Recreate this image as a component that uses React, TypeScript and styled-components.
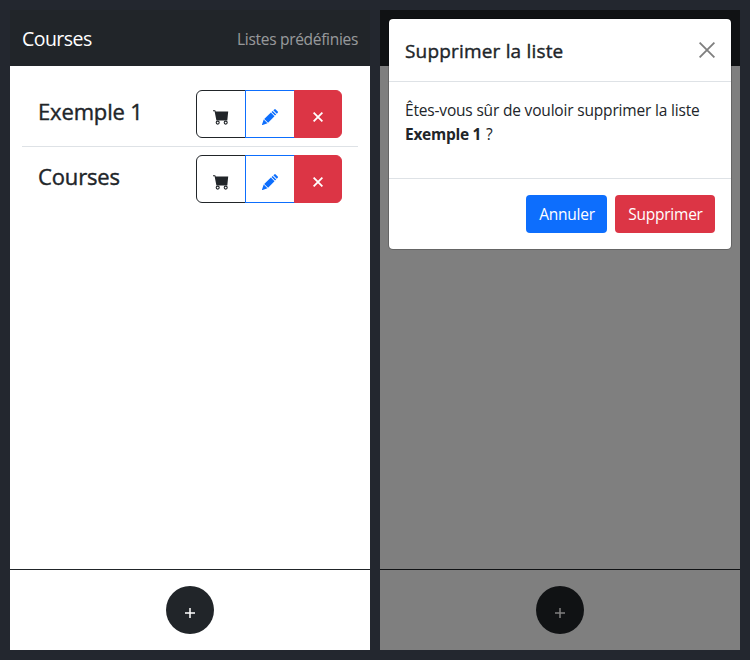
import React from "react";
import styled, { createGlobalStyle } from "styled-components";

const Global = createGlobalStyle`
  *, *::before, *::after { box-sizing: border-box; }
  body {
    margin: 0;
    background: #23272f;
    color: #212529;
    font-family: "Segoe UI", "Open Sans", "Noto Sans", sans-serif;
    font-size: 15.5px;
    letter-spacing: -0.18px;
    line-height: 24px;
  }
  h2, h5, p { margin: 0; }
  button { font: inherit; letter-spacing: inherit; cursor: pointer; }
`;

const Stage = styled.main`
  display: flex;
  gap: 10px;
  padding: 10px;
  height: 660px;
`;

const Screen = styled.section`
  position: relative;
  display: flex;
  flex-direction: column;
  width: 360px;
  height: 640px;
  background: #fff;
`;

const Navbar = styled.nav`
  display: flex;
  align-items: center;
  justify-content: space-between;
  height: 56px;
  padding: 1px 12px 0;
  background: #212529;
`;

const Brand = styled.span`
  color: #fff;
  font-size: 19.5px;
  line-height: 30px;
  letter-spacing: -0.55px;
  padding-top: 1px;
`;

const NavLink = styled.a`
  color: rgba(255, 255, 255, 0.55);
  letter-spacing: -0.3px;
`;

const Lists = styled.div`
  flex: 1;
  padding: 16px 12px;
`;

const ListRow = styled.div`
  display: flex;
  justify-content: space-between;
  padding: 8px 16px;
  & + & { border-top: 1px solid #dee2e6; }
`;

const ListName = styled.h2`
  font-size: 22px;
  font-weight: 500;
  line-height: 29px;
  letter-spacing: -0.15px;
  padding-top: 7px;
  -webkit-text-stroke: 0.4px currentColor;
`;

const ButtonGroup = styled.div`
  display: flex;
`;

const tones = { dark: "#212529", primary: "#0d6efd", danger: "#dc3545" };

const GroupButton = styled.button<{ $tone: keyof typeof tones; $filled?: boolean }>`
  display: flex;
  align-items: center;
  justify-content: center;
  width: ${(p) => (p.$filled ? 48 : 50)}px;
  height: 48px;
  padding: ${(p) => (p.$filled ? 5 : 6)}px 0 0;
  border: 1px solid ${(p) => tones[p.$tone]};
  background: ${(p) => (p.$filled ? tones[p.$tone] : "#fff")};
  color: ${(p) => (p.$filled ? "#fff" : tones[p.$tone])};
  & + & { margin-left: -1px; }
  &:first-child { border-radius: 6px 0 0 6px; }
  &:last-child { border-radius: 0 6px 6px 0; }
`;

const Footer = styled.footer`
  display: flex;
  justify-content: center;
  height: 81px;
  padding-top: 16px;
  border-top: 1px solid #212529;
`;

const AddButton = styled.button`
  width: 48px;
  height: 48px;
  padding: 5px 0 0;
  border: 0;
  border-radius: 50%;
  background: #212529;
  color: #fff;
  display: flex;
  align-items: center;
  justify-content: center;
`;

const Backdrop = styled.div`
  position: absolute;
  inset: 0;
  padding: 8px;
  background: rgba(0, 0, 0, 0.5);
`;

const Dialog = styled.div`
  border: 1px solid rgba(0, 0, 0, 0.2);
  border-radius: 5px;
  background: #fff;
  background-clip: padding-box;
`;

const DialogHeader = styled.header`
  display: flex;
  align-items: center;
  justify-content: space-between;
  height: 63px;
  padding: 0 16px;
  border-bottom: 1px solid #dee2e6;
`;

const DialogTitle = styled.h5`
  font-size: 19px;
  font-weight: 500;
  line-height: 30px;
  letter-spacing: 0.18px;
  padding-top: 1px;
  -webkit-text-stroke: 0.4px currentColor;
`;

const CloseButton = styled.button`
  display: flex;
  padding: 0;
  border: 0;
  background: none;
  color: #000;
  opacity: 0.5;
`;

const DialogBody = styled.div`
  height: 96px;
  padding: 16px;
  white-space: nowrap;
`;

const ListRef = styled.b`
  letter-spacing: -0.28px;
  margin-right: 1px;
`;

const DialogFooter = styled.footer`
  display: flex;
  justify-content: flex-end;
  gap: 8px;
  padding: 16px;
  border-top: 1px solid #dee2e6;
`;

const ActionButton = styled.button<{ $tone: keyof typeof tones; $width: number }>`
  width: ${(p) => p.$width}px;
  height: 38px;
  padding: 0 0 1px 1px;
  border: 0;
  border-radius: 4px;
  background: ${(p) => tones[p.$tone]};
  color: #fff;
  letter-spacing: -0.25px;
`;

const Cart = () => (
  <svg width="16" height="16" viewBox="0 0 16 16" fill="currentColor">
    <path d="M0 1.300h2.200l.5 1.200h12.500l-.9 9H3.400L1.600 2.200H0z" />
    <g fill="none" stroke="currentColor" strokeWidth="1.1">
      <circle cx="4.700" cy="13.6" r="1.5" />
      <circle cx="12.700" cy="13.6" r="1.5" />
    </g>
  </svg>
);

const Pencil = () => (
  <svg width="16" height="16" viewBox="0 0 16 16" fill="currentColor">
    <path d="M12.300.4a1 1 0 0 1 1.400 0l2 2a1 1 0 0 1 0 1.400l-.9 1L11.300 1.300zM10.700 1.900l3.500 3.500-1.200 1.200-3.500-3.500zM8.900 3.600l3.600 3.600-6.400 6.600-3.900-3.900zM1.700 10.500l3.800 3.800L.600 16Q-.2 16.200 0 15.400z" />
  </svg>
);

const Cross = ({ size, weight }: { size: number; weight: number }) => (
  <svg width={size} height={size} viewBox={`0 0 ${size} ${size}`} stroke="currentColor" fill="none">
    <path d={`M.6.6L${size - 0.6} ${size - 0.6}M${size - 0.6}.6L.6 ${size - 0.6}`} strokeWidth={weight} />
  </svg>
);

const Plus = () => (
  <svg width="10" height="10" viewBox="0 0 10 10" stroke="currentColor">
    <path d="M0 5h10M5 0v10" strokeWidth="1.500" />
  </svg>
);

const AddBar = () => (
  <Footer>
    <AddButton aria-label="Ajouter"><Plus /></AddButton>
  </Footer>
);

export default function App() {
  return (
    <>
      <Global />
      <Stage>
        <Screen>
          <Navbar>
            <Brand>Courses</Brand>
            <NavLink>Listes prédéfinies</NavLink>
          </Navbar>
          <Lists>
            {["Exemple 1", "Courses"].map((name) => (
              <ListRow key={name}>
                <ListName>{name}</ListName>
                <ButtonGroup>
                  <GroupButton $tone="dark" aria-label="Acheter"><Cart /></GroupButton>
                  <GroupButton $tone="primary" aria-label="Modifier"><Pencil /></GroupButton>
                  <GroupButton $tone="danger" $filled aria-label="Supprimer"><Cross size={10} weight={1.8} /></GroupButton>
                </ButtonGroup>
              </ListRow>
            ))}
          </Lists>
          <AddBar />
        </Screen>
        <Screen>
          <Navbar />
          <Lists />
          <AddBar />
          <Backdrop>
            <Dialog role="dialog">
              <DialogHeader>
                <DialogTitle>Supprimer la liste</DialogTitle>
                <CloseButton aria-label="Fermer"><Cross size={16} weight={1.8} /></CloseButton>
              </DialogHeader>
              <DialogBody>
                <p>Êtes-vous sûr de vouloir supprimer la liste<br /><ListRef>Exemple 1</ListRef> ?</p>
              </DialogBody>
              <DialogFooter>
                <ActionButton $tone="primary" $width={81}>Annuler</ActionButton>
                <ActionButton $tone="danger" $width={100}>Supprimer</ActionButton>
              </DialogFooter>
            </Dialog>
          </Backdrop>
        </Screen>
      </Stage>
    </>
  );
}
